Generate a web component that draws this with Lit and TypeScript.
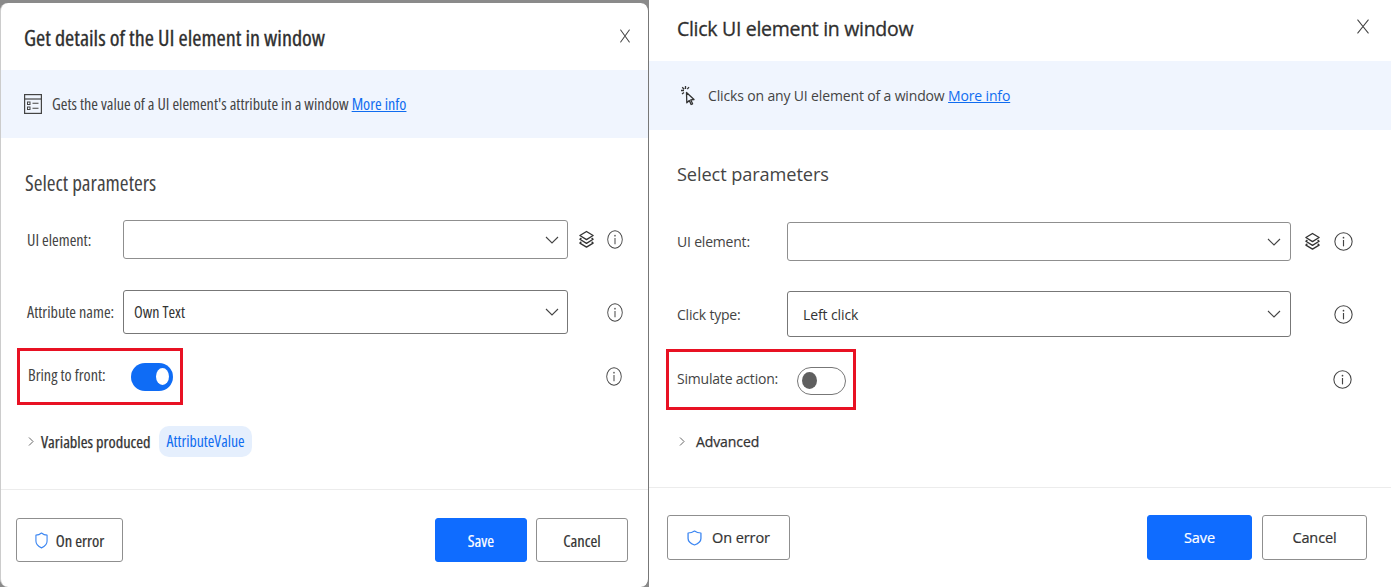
import { LitElement, html, css } from "lit";
import { customElement } from "lit/decorators.js";

const chevronDown = html`<svg class="chev" viewBox="0 0 14 8" width="14" height="8"><path d="M1 1l6 6 6-6" fill="none" stroke="#444" stroke-width="1.1"/></svg>`;
const info = html`<svg class="info" viewBox="0 0 18 18" preserveAspectRatio="none"><circle cx="9" cy="9" r="8.200" fill="none" stroke="#444" stroke-width="1"/><circle cx="9" cy="5.400" r=".8" fill="#444"/><path d="M9 7.600v6" stroke="#444" stroke-width="1.100"/></svg>`;
const layers = html`<svg class="layers" viewBox="0 0 18 20" width="17" height="19"><g fill="none" stroke="#333" stroke-width="1.400" stroke-linejoin="round"><path d="M9 1.500l7 4.300-7 4.300-7-4.300z"/><path d="M3.600 8.400L2 9.800l7 4.300 7-4.300-1.600-1.400"/><path d="M3.600 12.400L2 13.800l7 4.300 7-4.300-1.600-1.400"/></g></svg>`;
const closeX = html`<svg class="close" viewBox="0 0 12 12" preserveAspectRatio="none"><path d="M.5.5l11 11M11.500.5l-11 11" stroke="#444" stroke-width="1.100"/></svg>`;
const shield = html`<svg class="shield" viewBox="0 0 14 16" preserveAspectRatio="none"><path d="M7 1c1.700 1.300 3.700 2 6 2v5.500c0 3-2.200 5-6 6.500-3.800-1.500-6-3.500-6-6.500V3c2.300 0 4.300-.7 6-2z" fill="none" stroke="#3b86f2" stroke-width="1.200" stroke-linejoin="round"/></svg>`;
const chevRight = html`<svg viewBox="0 0 6 10" width="6" height="11"><path d="M1 1l4 4-4 4" fill="none" stroke="#666" stroke-width="1"/></svg>`;
const detailsIcon = html`<svg viewBox="0 0 18 20" width="18" height="20"><rect x=".6" y=".6" width="16.800" height="18.800" fill="none" stroke="#444" stroke-width="1.200"/><path d="M1 5h16" stroke="#444" stroke-width="1.200"/><rect x="3.500" y="8" width="2.500" height="2.500" fill="none" stroke="#444"/><rect x="3.500" y="13" width="2.500" height="2.500" fill="none" stroke="#444"/><path d="M8.500 9.300h6M8.500 14.300h6" stroke="#444" stroke-width="1.100"/></svg>`;
const clickIcon = html`<svg viewBox="0 0 16 22" width="16" height="22"><g stroke="#333" stroke-width="1.300" fill="none"><path d="M6.500 7.500l7.500 7-3.300.3 1.900 4-1.500.7-1.800-4-2.500 2.300z" stroke-linejoin="round"/><path d="M5.500 1v3M1 5.500h3M2.200 2.200l2 2M9 2.200l-1.700 2M2 9l2-1.500"/></g></svg>`;

interface Row { label: string; value?: string; layered?: boolean; cls: string }
interface Dlg {
  cls: string; title: string; desc: string; icon: unknown; rows: Row[];
  toggleLabel: string; on: boolean; disclosure: string; chip?: string;
}

const dialogs: Dlg[] = [
  {
    cls: "d1", title: "Get details of the UI element in window",
    desc: "Gets the value of a UI element's attribute in a window", icon: detailsIcon,
    rows: [
      { label: "UI element:", layered: true, cls: "r1" },
      { label: "Attribute name:", value: "Own Text", cls: "r2" },
    ],
    toggleLabel: "Bring to front:", on: true, disclosure: "Variables produced", chip: "AttributeValue",
  },
  {
    cls: "d2", title: "Click UI element in window",
    desc: "Clicks on any UI element of a window", icon: clickIcon,
    rows: [
      { label: "UI element:", layered: true, cls: "r1" },
      { label: "Click type:", value: "Left click", cls: "r2" },
    ],
    toggleLabel: "Simulate action:", on: false, disclosure: "Advanced",
  },
];

@customElement("app-root")
export class AppRoot extends LitElement {
  static styles = css`
    :host { display: flex; width: 1391px; height: 587px; overflow: hidden; background: #fff;
      font-family: "Open Sans", "Noto Sans", sans-serif; color: #333; }
    * { box-sizing: border-box; }
    .pane { display: flex; flex-direction: column; }
    .pane.d1 { width: 649px; padding-top: 3px; background: #8a8a8a; font-stretch: 75%; }
    .pane.d2 { width: 742px; background: #fff; }
    .dialog { background: #fff; flex: 1; display: flex; flex-direction: column; border-radius: 8px; }
    .d1 .dialog { border-left: 1px solid #ccc; border-right: 1px solid #777; }
    .d2 .dialog { border-radius: 0; }
    .head { display: flex; align-items: center; justify-content: space-between; }
    .d1 .head { height: 67px; padding: 2px 18px 0 23px; }
    .d2 .head { height: 61px; padding: 0 22px 4px 28px; }
    .title { color: #2f2f2f; -webkit-text-stroke: .3px #2f2f2f; }
    .d1 .title { font-size: 22.200px; }
    .d2 .title { font-size: 19.500px; letter-spacing: -.3px; }
    .close { display: block; }
    .d1 .close { width: 10px; height: 14px; margin-bottom: 4px; }
    .d2 .close { width: 12px; height: 15px; margin-bottom: 4px; }
    .band { background: #f0f5fe; display: flex; align-items: center; color: #444; }
    .d1 .band { height: 68px; padding-left: 23px; gap: 10px; font-size: 16.150px; }
    .d2 .band { height: 69px; padding: 0 0 0 31px; gap: 12px; font-size: 14px; letter-spacing: -.15px; }
    .band a { color: #0f6cf0; text-decoration: underline; }
    .sect { color: #444; height: 26px; line-height: 26px; }
    .d1 .sect { margin: 32px 0 0 24px; font-size: 21.200px; }
    .d2 .sect { margin: 31px 0 0 28px; font-size: 18.200px; letter-spacing: -.1px; }
    .row { display: flex; align-items: center; }
    .label { color: #444; }
    .d1 .label { font-size: 16.200px; }
    .d2 .label { font-size: 14px; letter-spacing: -.2px; }
    .d1 .row { padding-left: 26px; }
    .d2 .row { padding-left: 28px; }
    .d1 .row .label { width: 96px; }
    .d2 .row .label { width: 110px; }
    .select { height: 100%; display: flex; align-items: center; justify-content: space-between;
      border: 1px solid #8f8f8f; border-radius: 3px; background: #fff; color: #333; }
    .r2 .select { border-color: #777; }
    .d1 .select { width: 445px; padding: 0 8px 0 10px; font-size: 16px; }
    .d2 .select { width: 504px; padding: 0 9px 0 15px; font-size: 14px; letter-spacing: -.1px; }
    .d1 .r1 { height: 39px; margin-top: 24px; }
    .d1 .r2 { height: 44px; margin-top: 31px; }
    .d2 .r1 { height: 39px; margin-top: 35px; }
    .d2 .r2 { height: 46px; margin-top: 30px; }
    .aux { display: flex; align-items: center; justify-content: space-between; }
    .d1 .aux { width: 55px; padding-left: 10px; }
    .d2 .aux { width: 62px; padding-left: 13px; }
    .aux .spacer { width: 17px; }
    .info { display: block; }
    .d1 .info { width: 16px; height: 19px; }
    .d2 .info { width: 19px; height: 19px; }
    .toggle-row { display: flex; align-items: center; justify-content: space-between; }
    .d1 .toggle-row { margin: 14px 0 0 16px; height: 57px; padding-right: 26px; }
    .d2 .toggle-row { margin: 12px 0 0 17px; height: 61px; padding-right: 39px; }
    .redbox { height: 100%; display: flex; align-items: center; border: 3px solid #e81123; }
    .d1 .redbox { width: 166px; padding: 0 0 4px 8px; }
    .d2 .redbox { width: 190px; padding: 0 0 2px 8px; }
    .d1 .redbox .label { width: 103px; }
    .d2 .redbox .label { width: 120px; }
    .switch { border-radius: 15px; display: flex; align-items: center; margin-top: 4px; }
    .switch.on { width: 42px; height: 28px; background: #0f6cf5; justify-content: flex-end; padding-right: 4px; }
    .switch.off { width: 49px; height: 28px; border: 1.500px solid #777; padding-left: 4px; background: #fff; }
    .knob { border-radius: 50%; }
    .on .knob { width: 13px; height: 17px; background: #fff; }
    .off .knob { width: 15px; height: 17px; background: #5f5f5f; }
    .disc { display: flex; align-items: center; color: #333; height: 32px; }
    .disc > span:first-of-type { -webkit-text-stroke: .25px #333; }
    .d1 .disc { margin: 20px 0 0 27px; gap: 7px; font-size: 16.400px; }
    .d2 .disc { margin: 15px 0 0 30px; gap: 11px; font-size: 14px; letter-spacing: -.1px; }
    .chip { background: #e5effd; color: #0f6cf0; border-radius: 10px; height: 31px; display: flex; align-items: center; padding: 0 7px; margin-left: 2px; font-size: 15.800px; }
    .rule { height: 1px; background: #ececec; }
    .d1 .rule { margin-top: 32px; }
    .d2 .rule { margin-top: 30px; }
    .foot { display: flex; align-items: center; }
    .d1 .foot { padding: 28px 20px 0 15px; }
    .d2 .foot { padding: 27px 24px 0 18px; }
    .btn { border: 1px solid #8f8f8f; border-radius: 3px; background: #fff; display: flex; align-items: center; justify-content: center;
      color: #333; -webkit-text-stroke: .2px currentColor; }
    .d1 .btn { height: 44px; font-size: 16.500px; }
    .d2 .btn { height: 45px; font-size: 14.500px; letter-spacing: -.1px; }
    .shield { display: block; }
    .d1 .shield { width: 13px; height: 17px; }
    .d2 .shield { width: 15px; height: 16px; }
    .err { gap: 8px; }
    .d1 .err { width: 107px; }
    .d2 .err { width: 123px; gap: 10px; }
    .grow { flex: 1; }
    .btn.save { background: #0f6cff; border-color: #0f6cff; color: #fff; }
    .d1 .save { width: 92px; margin-right: 9px; }
    .d1 .cancel { width: 92px; }
    .d2 .save { width: 105px; margin-right: 10px; }
    .d2 .cancel { width: 105px; }
  `;

  private row(r: Row) {
    return html`<div class="row ${r.cls}">
      <span class="label">${r.label}</span>
      <div class="select"><span>${r.value ?? ""}</span>${chevronDown}</div>
      <div class="aux">${r.layered ? layers : html`<span class="spacer"></span>`}${info}</div>
    </div>`;
  }

  private dialog(d: Dlg) {
    return html`<div class="pane ${d.cls}"><div class="dialog">
      <div class="head"><span class="title">${d.title}</span>${closeX}</div>
      <div class="band">${d.icon}<span>${d.desc} <a>More info</a></span></div>
      <div class="sect">Select parameters</div>
      ${d.rows.map((r) => this.row(r))}
      <div class="toggle-row">
        <div class="redbox"><span class="label">${d.toggleLabel}</span>
          <span class="switch ${d.on ? "on" : "off"}"><span class="knob"></span></span></div>
        ${info}
      </div>
      <div class="disc">${chevRight}<span>${d.disclosure}</span>${d.chip ? html`<span class="chip">${d.chip}</span>` : ""}</div>
      <div class="rule"></div>
      <div class="foot">
        <div class="btn err">${shield}<span>On error</span></div>
        <span class="grow"></span>
        <div class="btn save">Save</div>
        <div class="btn cancel">Cancel</div>
      </div>
    </div></div>`;
  }

  render() {
    return html`${dialogs.map((d) => this.dialog(d))}`;
  }
}
